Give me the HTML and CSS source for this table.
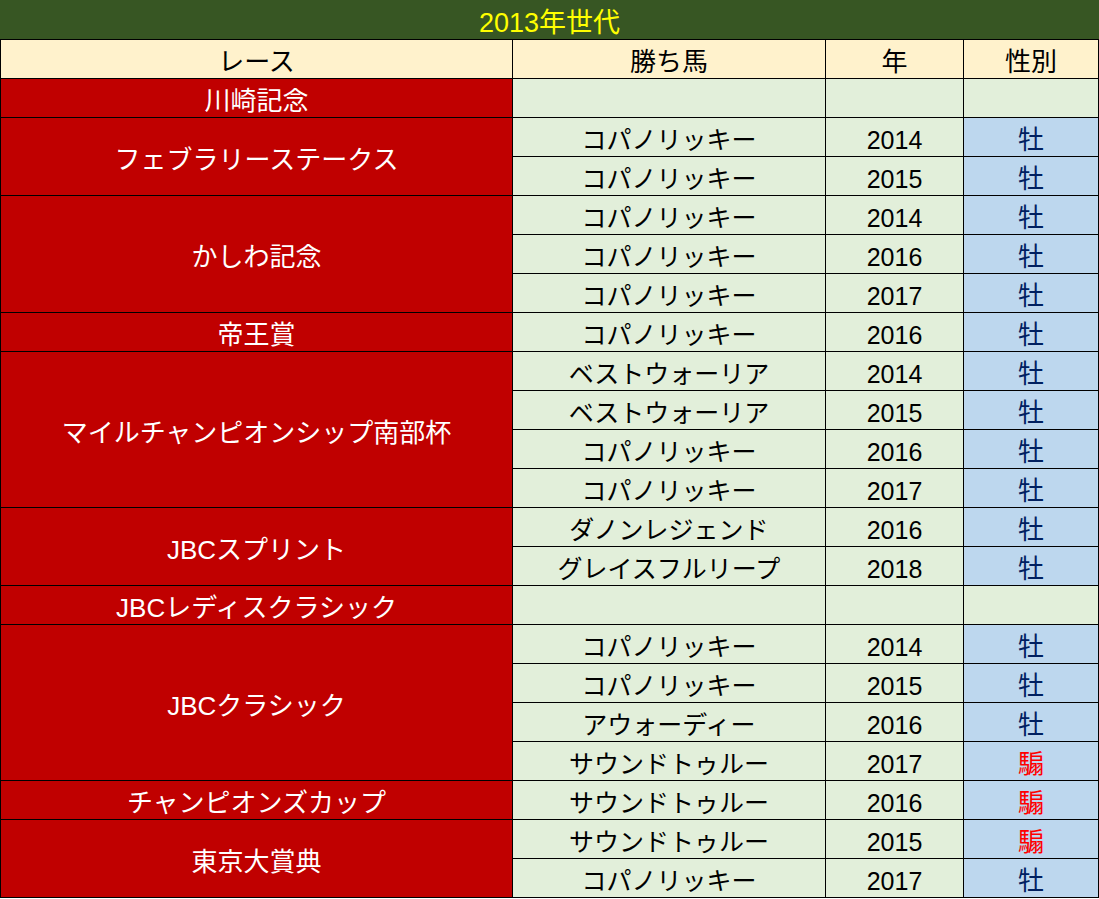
FILE: index.html
```html
<!DOCTYPE html>
<html lang="ja">
<head>
<meta charset="utf-8">
<title>2013年世代</title>
<link rel="stylesheet" href="styles.css">
</head>
<body>
<table class="sheet">
  <colgroup>
    <col class="c-race">
    <col class="c-horse">
    <col class="c-year">
    <col class="c-sex">
  </colgroup>
  <thead>
    <tr><th class="title" colspan="4">2013年世代</th></tr>
    <tr class="head"><th>レース</th><th>勝ち馬</th><th>年</th><th>性別</th></tr>
  </thead>
  <tbody>
    <tr><td class="race">川崎記念</td><td class="cell"></td><td class="cell"></td><td class="cell"></td></tr>

    <tr><td class="race" rowspan="2">フェブラリーステークス</td><td class="cell">コパノリッキー</td><td class="cell">2014</td><td class="sex m">牡</td></tr>
    <tr><td class="cell">コパノリッキー</td><td class="cell">2015</td><td class="sex m">牡</td></tr>

    <tr><td class="race" rowspan="3">かしわ記念</td><td class="cell">コパノリッキー</td><td class="cell">2014</td><td class="sex m">牡</td></tr>
    <tr><td class="cell">コパノリッキー</td><td class="cell">2016</td><td class="sex m">牡</td></tr>
    <tr><td class="cell">コパノリッキー</td><td class="cell">2017</td><td class="sex m">牡</td></tr>

    <tr><td class="race">帝王賞</td><td class="cell">コパノリッキー</td><td class="cell">2016</td><td class="sex m">牡</td></tr>

    <tr><td class="race" rowspan="4">マイルチャンピオンシップ南部杯</td><td class="cell">ベストウォーリア</td><td class="cell">2014</td><td class="sex m">牡</td></tr>
    <tr><td class="cell">ベストウォーリア</td><td class="cell">2015</td><td class="sex m">牡</td></tr>
    <tr><td class="cell">コパノリッキー</td><td class="cell">2016</td><td class="sex m">牡</td></tr>
    <tr><td class="cell">コパノリッキー</td><td class="cell">2017</td><td class="sex m">牡</td></tr>

    <tr><td class="race" rowspan="2">JBCスプリント</td><td class="cell">ダノンレジェンド</td><td class="cell">2016</td><td class="sex m">牡</td></tr>
    <tr><td class="cell">グレイスフルリープ</td><td class="cell">2018</td><td class="sex m">牡</td></tr>

    <tr><td class="race">JBCレディスクラシック</td><td class="cell"></td><td class="cell"></td><td class="cell"></td></tr>

    <tr><td class="race" rowspan="4">JBCクラシック</td><td class="cell">コパノリッキー</td><td class="cell">2014</td><td class="sex m">牡</td></tr>
    <tr><td class="cell">コパノリッキー</td><td class="cell">2015</td><td class="sex m">牡</td></tr>
    <tr><td class="cell">アウォーディー</td><td class="cell">2016</td><td class="sex m">牡</td></tr>
    <tr><td class="cell">サウンドトゥルー</td><td class="cell">2017</td><td class="sex g">騸</td></tr>

    <tr><td class="race">チャンピオンズカップ</td><td class="cell">サウンドトゥルー</td><td class="cell">2016</td><td class="sex g">騸</td></tr>

    <tr><td class="race" rowspan="2">東京大賞典</td><td class="cell">サウンドトゥルー</td><td class="cell">2015</td><td class="sex g">騸</td></tr>
    <tr><td class="cell">コパノリッキー</td><td class="cell">2017</td><td class="sex m">牡</td></tr>
  </tbody>
</table>
</body>
</html>
```
FILE: styles.css
```css
html, body {
  margin: 0;
  padding: 0;
  background: #ffffff;
}

.sheet {
  border-collapse: collapse;
  table-layout: fixed;
  width: 1098px;
  font-family: "Liberation Sans", "Noto Sans CJK JP", sans-serif;
  font-size: 25px;
  line-height: 1;
}

.c-race { width: 512px; }
.c-horse { width: 313px; }
.c-year { width: 138px; }
.c-sex { width: 135px; }

.sheet th,
.sheet td {
  height: 39px;
  padding: 6px 0 0 0;
  box-sizing: border-box;
  border: 1px solid #000000;
  text-align: center;
  vertical-align: middle;
  font-weight: normal;
  white-space: nowrap;
}

.sheet .title {
  background: #375623;
  color: #ffff00;
  font-size: 27px;
  border-color: #375623;
  border-bottom-color: #000000;
}

.head th {
  background: #fff2cc;
  color: #000000;
  font-size: 26px;
}

.race {
  background: #c00000;
  color: #ffffff;
  font-size: 26px;
}

.cell {
  background: #e2efda;
  color: #000000;
}

.sex {
  background: #bdd7ee;
  font-size: 26px;
}

.sex.m { color: #002060; }
.sex.g { color: #ff0000; }
```
